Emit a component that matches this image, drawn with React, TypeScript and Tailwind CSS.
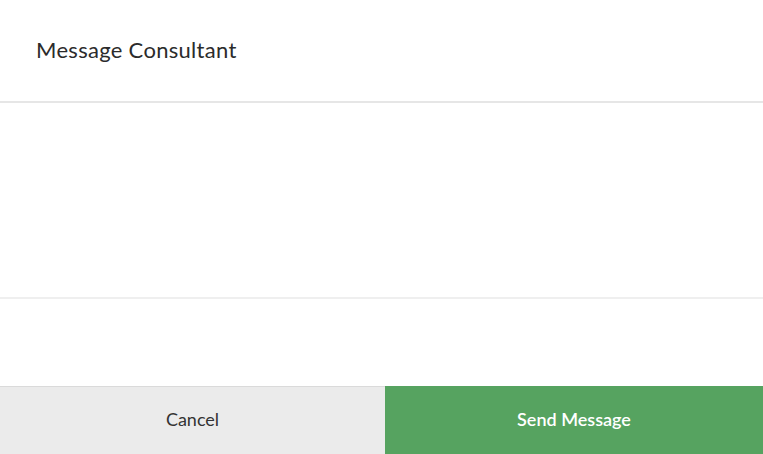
export default function App() {
  return (
    <div
      className="flex flex-col w-screen h-[454px] bg-white text-[#2b2b2b]"
      style={{ fontFamily: '"Lato", "Noto Sans", sans-serif' }}
    >
      {/* Header */}
      <div className="h-[103px] flex items-center px-9 pb-[3px] border-b-2 border-[#e6e6e6]">
        <div className="text-[22px] tracking-[0.3px]">Message Consultant</div>
      </div>
      {/* Message body */}
      <textarea className="h-[196px] w-full resize-none outline-none border-b-2 border-[#efefef] px-9 py-4" />
      <div className="flex-grow" />
      {/* Footer buttons */}
      <div className="flex h-[68px]">
        <button className="w-[385px] bg-[#ebebeb] border-t border-[#dadada] text-[18px] text-[#333] pb-[2px]">
          Cancel
        </button>
        <button className="flex-grow bg-[#56a360] text-white text-[18px] font-semibold pb-[2px]">
          Send Message
        </button>
      </div>
    </div>
  );
}
